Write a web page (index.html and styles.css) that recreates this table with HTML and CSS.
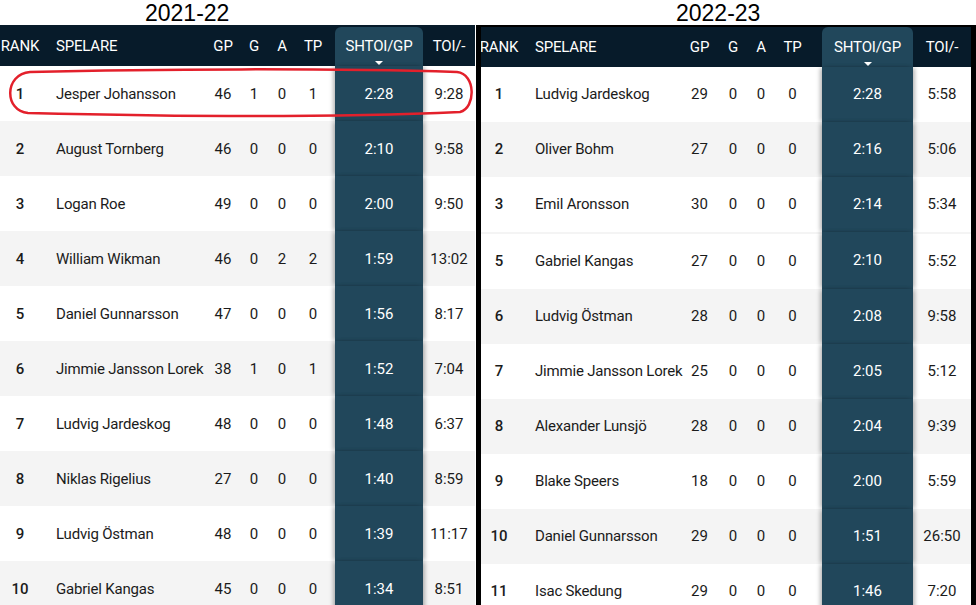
FILE: index.html
```html
<!DOCTYPE html>
<html>
<head>
<meta charset="utf-8">
<link rel="stylesheet" href="styles.css">
</head>
<body>
<div class="page">
  <section class="panel panel-left">
    <h2 class="season">2021-22</h2>
    <div class="table">
      <div class="row head">
        <div class="c rank">RANK</div><div class="c name">SPELARE</div><div class="c num">GP</div><div class="c num">G</div><div class="c num">A</div><div class="c num">TP</div><div class="c gap"></div><div class="c sort">SHTOI/GP<span class="caret"></span></div><div class="c num">TOI/-</div>
      </div>
      <div class="row"><div class="c rank">1</div><div class="c name">Jesper Johansson</div><div class="c num">46</div><div class="c num">1</div><div class="c num">0</div><div class="c num">1</div><div class="c gap"></div><div class="c sort">2:28</div><div class="c num">9:28</div></div>
      <div class="row"><div class="c rank">2</div><div class="c name">August Tornberg</div><div class="c num">46</div><div class="c num">0</div><div class="c num">0</div><div class="c num">0</div><div class="c gap"></div><div class="c sort">2:10</div><div class="c num">9:58</div></div>
      <div class="row"><div class="c rank">3</div><div class="c name">Logan Roe</div><div class="c num">49</div><div class="c num">0</div><div class="c num">0</div><div class="c num">0</div><div class="c gap"></div><div class="c sort">2:00</div><div class="c num">9:50</div></div>
      <div class="row"><div class="c rank">4</div><div class="c name">William Wikman</div><div class="c num">46</div><div class="c num">0</div><div class="c num">2</div><div class="c num">2</div><div class="c gap"></div><div class="c sort">1:59</div><div class="c num">13:02</div></div>
      <div class="row"><div class="c rank">5</div><div class="c name">Daniel Gunnarsson</div><div class="c num">47</div><div class="c num">0</div><div class="c num">0</div><div class="c num">0</div><div class="c gap"></div><div class="c sort">1:56</div><div class="c num">8:17</div></div>
      <div class="row"><div class="c rank">6</div><div class="c name">Jimmie Jansson Lorek</div><div class="c num">38</div><div class="c num">1</div><div class="c num">0</div><div class="c num">1</div><div class="c gap"></div><div class="c sort">1:52</div><div class="c num">7:04</div></div>
      <div class="row"><div class="c rank">7</div><div class="c name">Ludvig Jardeskog</div><div class="c num">48</div><div class="c num">0</div><div class="c num">0</div><div class="c num">0</div><div class="c gap"></div><div class="c sort">1:48</div><div class="c num">6:37</div></div>
      <div class="row"><div class="c rank">8</div><div class="c name">Niklas Rigelius</div><div class="c num">27</div><div class="c num">0</div><div class="c num">0</div><div class="c num">0</div><div class="c gap"></div><div class="c sort">1:40</div><div class="c num">8:59</div></div>
      <div class="row"><div class="c rank">9</div><div class="c name">Ludvig Östman</div><div class="c num">48</div><div class="c num">0</div><div class="c num">0</div><div class="c num">0</div><div class="c gap"></div><div class="c sort">1:39</div><div class="c num">11:17</div></div>
      <div class="row"><div class="c rank">10</div><div class="c name">Gabriel Kangas</div><div class="c num">45</div><div class="c num">0</div><div class="c num">0</div><div class="c num">0</div><div class="c gap"></div><div class="c sort">1:34</div><div class="c num">8:51</div></div>
    </div>
    <svg class="mark" width="476" height="60" viewBox="0 0 476 60">
      <path d="M30 6 C 150 3, 330 2, 457 6 C 476 8, 476 42, 460 46 C 330 52, 150 50, 28 47 C 4 45, 4 8, 30 6 Z" fill="none" stroke="#e3202b" stroke-width="2.5"/>
    </svg>
  </section>
  <section class="panel panel-right">
    <h2 class="season">2022-23</h2>
    <div class="table framed">
      <div class="row head">
        <div class="c rank">RANK</div><div class="c name">SPELARE</div><div class="c num">GP</div><div class="c num">G</div><div class="c num">A</div><div class="c num">TP</div><div class="c gap"></div><div class="c sort">SHTOI/GP<span class="caret"></span></div><div class="c num">TOI/-</div>
      </div>
      <div class="row plain"><div class="c rank">1</div><div class="c name">Ludvig Jardeskog</div><div class="c num">29</div><div class="c num">0</div><div class="c num">0</div><div class="c num">0</div><div class="c gap"></div><div class="c sort">2:28</div><div class="c num">5:58</div></div>
      <div class="row shade"><div class="c rank">2</div><div class="c name">Oliver Bohm</div><div class="c num">27</div><div class="c num">0</div><div class="c num">0</div><div class="c num">0</div><div class="c gap"></div><div class="c sort">2:16</div><div class="c num">5:06</div></div>
      <div class="row plain"><div class="c rank">3</div><div class="c name">Emil Aronsson</div><div class="c num">30</div><div class="c num">0</div><div class="c num">0</div><div class="c num">0</div><div class="c gap"></div><div class="c sort">2:14</div><div class="c num">5:34</div></div>
      <div class="row cut"><div class="c rank">5</div><div class="c name">Gabriel Kangas</div><div class="c num">27</div><div class="c num">0</div><div class="c num">0</div><div class="c num">0</div><div class="c gap"></div><div class="c sort">2:10</div><div class="c num">5:52</div></div>
      <div class="row shade"><div class="c rank">6</div><div class="c name">Ludvig Östman</div><div class="c num">28</div><div class="c num">0</div><div class="c num">0</div><div class="c num">0</div><div class="c gap"></div><div class="c sort">2:08</div><div class="c num">9:58</div></div>
      <div class="row plain"><div class="c rank">7</div><div class="c name">Jimmie Jansson Lorek</div><div class="c num">25</div><div class="c num">0</div><div class="c num">0</div><div class="c num">0</div><div class="c gap"></div><div class="c sort">2:05</div><div class="c num">5:12</div></div>
      <div class="row shade"><div class="c rank">8</div><div class="c name">Alexander Lunsjö</div><div class="c num">28</div><div class="c num">0</div><div class="c num">0</div><div class="c num">0</div><div class="c gap"></div><div class="c sort">2:04</div><div class="c num">9:39</div></div>
      <div class="row plain"><div class="c rank">9</div><div class="c name">Blake Speers</div><div class="c num">18</div><div class="c num">0</div><div class="c num">0</div><div class="c num">0</div><div class="c gap"></div><div class="c sort">2:00</div><div class="c num">5:59</div></div>
      <div class="row shade"><div class="c rank">10</div><div class="c name">Daniel Gunnarsson</div><div class="c num">29</div><div class="c num">0</div><div class="c num">0</div><div class="c num">0</div><div class="c gap"></div><div class="c sort">1:51</div><div class="c num">26:50</div></div>
      <div class="row plain"><div class="c rank">11</div><div class="c name">Isac Skedung</div><div class="c num">29</div><div class="c num">0</div><div class="c num">0</div><div class="c num">0</div><div class="c gap"></div><div class="c sort">1:46</div><div class="c num">7:20</div></div>
    </div>
  </section>
</div>
</body>
</html>
```

FILE: styles.css
```css
* { box-sizing: border-box; }
html, body { margin: 0; padding: 0; background: #fff; }
body {
  font-family: Roboto, "Liberation Sans", sans-serif;
  color: #1b1b1b;
  width: 976px;
  height: 605px;
  overflow: hidden;
}
.page {
  display: flex;
  align-items: flex-start;
}
.panel {
  position: relative;
  display: flex;
  flex-direction: column;
}
.panel-left { width: 476px; }
.panel-right { width: 500px; }

.season {
  margin: 0;
  height: 25px;
  font-family: "Liberation Sans", Arial, sans-serif;
  font-weight: 400;
  font-size: 23px;
  line-height: 26px;
  color: #000;
}
.panel-left .season { padding-left: 145px; }
.panel-right .season { padding-left: 200px; }

.table { width: 475px; }
.table.framed {
  width: 500px;
  border: 5px solid #000;
  border-top-width: 2px;
  border-bottom: 0;
  height: 580px;
  overflow: hidden;
}

.row {
  display: grid;
  height: 55px;
  align-items: stretch;
  font-size: 15px;
}
.panel-left .row {
  grid-template-columns: 40px 168px 30px 32px 24px 38px 3px 88px 52px;
}
.panel-right .row {
  grid-template-columns: 36px 168px 29px 38px 18px 45px 7px 91px 58px;
}
.panel-left .row:nth-child(odd) { background: #f4f4f4; }
.panel-left .row:nth-child(even) { background: #fff; }
.row.plain { background: #fff; }
.row.shade { background: #f4f4f4; }
.row.cut {
  height: 57px;
  background: linear-gradient(#f4f4f4 0 2px, #fff 2px 100%);
}
.row.cut .c:not(.sort) { padding-top: 2px; }
.row.cut .c.name { padding-top: 2px; }

.row.head {
  height: 41px;
  background: #071b2a !important;
  color: #fff;
  font-size: 15px;
  letter-spacing: -0.2px;
}
.panel-right .row.head { height: 40px; }
.panel-right .row:not(.head) .c { padding-bottom: 1px; }

.c {
  display: flex;
  align-items: center;
  justify-content: center;
  white-space: nowrap;
}
.c.name { justify-content: flex-start; padding-left: 16px; }
.row:not(.head) .c.name { letter-spacing: -0.2px; }
.panel-right .c.name { padding-left: 18px; }
.c.rank { font-weight: 500; }
.head .c.rank { font-weight: 400; }

.c.sort {
  background: #21475b;
  color: #fff;
  box-shadow: 3px 0 4px -1px rgba(0,0,0,0.28), -3px 0 4px -1px rgba(0,0,0,0.28);
  position: relative;
}
.head .c.sort {
  flex-direction: column;
  justify-content: flex-start;
  padding-top: 10px;
  margin-top: 2px;
  border-radius: 6px 6px 0 0;
  box-shadow: none;
}
.panel-right .head .c.sort { margin-top: 0; padding-top: 11px; }
.caret {
  display: block;
  width: 0;
  height: 0;
  margin-top: 6px;
  border-left: 4px solid transparent;
  border-right: 4px solid transparent;
  border-top: 4px solid #fff;
}

.mark {
  position: absolute;
  left: 0;
  top: 66px;
}
```
